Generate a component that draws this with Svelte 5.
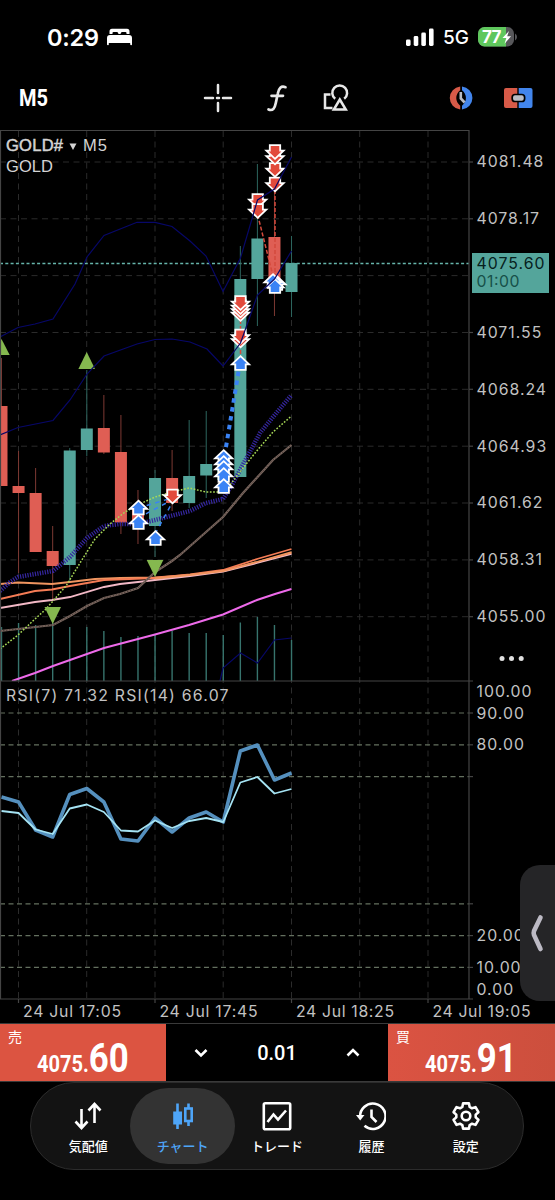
<script>
  const LEFT = 1.5;
  const STEP = 17.06;
  const RIGHT = 469;

  const prices = [
    ['4081.48', 162],
    ['4078.17', 218.8],
    ['4071.55', 332.5],
    ['4068.24', 389.3],
    ['4064.93', 446.2],
    ['4061.62', 503],
    ['4058.31', 559.9],
    ['4055.00', 616.7]
  ];
  const gridRows = [162, 218.8, 275.6, 332.5, 389.3, 446.2, 503, 559.9, 616.7];
  const gridCols = [18.5, 86.7, 155, 223.2, 291.5, 359.7, 428];
  const rsiRows = [713, 744.8, 776.6, 903.8, 935.6, 967.4];
  const rsiLabels = [
    ['100.00', 691],
    ['90.00', 713],
    ['80.00', 744.8],
    ['20.00', 935.6],
    ['10.00', 967.4],
    ['0.00', 989.5]
  ];
  const times = [
    ['24 Jul 17:05', 18.5],
    ['24 Jul 17:45', 155],
    ['24 Jul 18:25', 291.5],
    ['24 Jul 19:05', 428]
  ];

  // high, top of body, bottom of body, low, direction
  const candles = [
    [358, 406, 486, 486, 'down'],
    [451, 486, 493, 573, 'down'],
    [468, 493, 552, 552, 'down'],
    [526, 551, 566, 600, 'down'],
    [448, 450.5, 565, 582, 'up'],
    [370, 428.5, 450, 456, 'up'],
    [395, 428, 452.5, 454, 'down'],
    [415, 452, 522.5, 534, 'down'],
    [490, 508, 522, 544, 'down'],
    [470, 478, 526, 557, 'up'],
    [450, 478, 503, 511, 'down'],
    [420, 476, 503, 508, 'up'],
    [411, 464, 475.5, 498, 'up'],
    [452, 463, 480, 492, 'up'],
    [246, 279, 477, 477, 'up'],
    [164, 238.5, 279, 326, 'up'],
    [150, 237, 285, 316, 'down'],
    [236, 263, 292, 317, 'up']
  ];

  const volumes = [
    627, 623, 625, 623, 627, 627, 631, 637, 636, 634, 631, 633, 633, 635, 622.5,
    617, 625, 640
  ];

  // trade markers, [x, y of the tip], in the order they stack
  const buys = [
    [138.5, 499.5],
    [138.5, 514],
    [155.5, 530],
    [223.7, 449],
    [223.7, 455],
    [223.7, 460],
    [223.7, 467],
    [223.7, 478],
    [240.5, 355],
    [277, 275],
    [273, 273],
    [275, 278]
  ];
  const sells = [
    [172.5, 504.5],
    [240.5, 322],
    [240.5, 318.5],
    [240.5, 315],
    [240.5, 311],
    [240.5, 348.5],
    [240.5, 344.5],
    [257.7, 209],
    [257.7, 219],
    [275, 192.5],
    [275, 178],
    [275, 165.5],
    [275, 160]
  ];

  const rsi7 = [
    797, 802, 830, 837, 794.5, 788.5, 802, 839, 841, 818, 832, 818, 812, 822,
    751, 745, 780, 773
  ];
  const rsi14 = [
    811, 813, 829.5, 834, 808.5, 804.5, 812, 830.5, 831.5, 820.5, 828, 821, 818,
    822, 782.5, 777, 793.5, 789
  ];

  const tabs = [
    { id: 'quotes', label: '気配値' },
    { id: 'chart', label: 'チャート' },
    { id: 'trade', label: 'トレード' },
    { id: 'history', label: '履歴' },
    { id: 'settings', label: '設定' }
  ];

  let active = $state('chart');
  let volume = $state(0.01);

  function xOf(index) {
    return LEFT + index * STEP;
  }

  function toPoints(values) {
    return values.map((y, i) => `${xOf(i)},${y}`).join(' ');
  }

  function changeVolume(delta) {
    volume = Math.max(0.01, volume + delta);
  }

  // six teeth round a hub
  function gearPath() {
    const points = [];
    for (let i = 0; i < 6; i++) {
      for (const [offset, r] of [
        [-22, 9.8],
        [-13, 13],
        [13, 13],
        [22, 9.8]
      ]) {
        const a = ((i * 60 - 90 + offset) * Math.PI) / 180;
        points.push(
          `${(15 + r * Math.cos(a)).toFixed(2)} ${(15 + r * Math.sin(a)).toFixed(2)}`
        );
      }
    }
    return `M${points.join('L')}Z`;
  }
</script>

<div class="app">
  <div class="status">
    <div class="clock">
      <span>0:29</span>
      <svg width="25" height="18" viewBox="0 0 25 18">
        <path d="M2.5 6V3.4Q2.5 .8 5 .8H20Q22.5 .8 22.5 3.4V6H19.5V5Q19.5 4 18.5 4H15Q14 4 13.5 6H11.5Q11 4 10 4H6.5Q5.5 4 5.5 5V6Z" />
        <path d="M0 10Q0 7 3 7H22Q25 7 25 10V16.5Q25 17.3 24.2 17.3T23.2 16.5V15H1.8V16.5Q1.8 17.3 1 17.3T0 16.5Z" />
      </svg>
    </div>
    <div class="signals">
      <svg width="28" height="18" viewBox="0 0 28 18">
        <rect x="0" y="11.5" width="4.6" height="6.5" rx="1.4" />
        <rect x="7.7" y="8" width="4.6" height="10" rx="1.4" />
        <rect x="15.3" y="4.5" width="4.6" height="13.5" rx="1.4" />
        <rect x="23" y="0.5" width="4.6" height="17.5" rx="1.4" />
      </svg>
      <span class="network">5G</span>
      <svg width="40" height="20" viewBox="0 0 40 20">
        <clipPath id="cell"><rect width="36" height="19.5" rx="6.5" /></clipPath>
        <g clip-path="url(#cell)">
          <rect width="36" height="20" fill="#57575a" />
          <rect width="28" height="20" fill="#5fc75d" />
        </g>
        <path d="M37 6.5Q39 7.5 39 10T37 13.5Z" fill="#57575a" />
        <text class="charge" x="4" y="15.5" textLength="19.5">77</text>
        <path d="M31 4L24.5 11H28.3L26.5 16.8L33 9.3H29.2Z" />
      </svg>
    </div>
  </div>

  <header>
    <button class="period" aria-label="M5">
      <svg width="32" height="30">
        <text x="0" y="22.5" textLength="29" lengthAdjust="spacingAndGlyphs">M5</text>
      </svg>
    </button>
    <div class="tools">
      <svg width="30" height="30" viewBox="0 0 30 30" class="line">
        <path d="M15 2V10M15 20V28M2 15H10M20 15H28M14 15H16" stroke-width="2.5" stroke-linecap="round" />
      </svg>
      <svg width="30" height="30" viewBox="0 0 30 30" class="line">
        <path d="M6.5 26.5C11 28.3 12.8 25 13.8 20L15.8 10.5C16.8 5 19 2.6 23.5 4.2M9.5 12.8H21" stroke-width="2.7" stroke-linecap="round" />
      </svg>
      <svg width="30" height="30" viewBox="0 0 30 30" class="line">
        <path d="M9.5 11.5H4V25H11.5" stroke-width="2.5" />
        <path d="M14.2 15.8A7.4 7.4 0 1 1 23.2 15.8" stroke-width="2.5" />
        <path d="M18.8 16.5L24.8 26.5H12.8Z" stroke-width="2.5" />
      </svg>
    </div>
    <div class="trade-tools">
      <svg width="30" height="30" viewBox="0 0 30 30">
        <path d="M14.2 3.5A12 11.6 0 0 0 14.2 26.5V22.7A9.5 9.5 0 0 1 14.2 7.3Z" fill="#d75a48" />
        <path d="M16 3.5A12 11.6 0 0 1 16 26.5V22.7A9.5 9.5 0 0 0 16 7.3Z" fill="#4285ec" />
        <path d="M14.8 9V15.5L18.6 19.5" fill="none" stroke="#b9bcc4" stroke-width="2.6" />
      </svg>
      <svg width="30" height="30" viewBox="0 0 30 30">
        <path d="M14.3 5V25H3Q1 25 1 23V7Q1 5 3 5Z" fill="#d75a48" />
        <path d="M15.7 5V25H27.5Q29.5 25 29.5 23V7Q29.5 5 27.5 5Z" fill="#4285ec" />
        <rect x="9.2" y="11.5" width="12.4" height="7" rx="2.8" fill="#b9bcc4" stroke="#000" stroke-width="1.7" />
      </svg>
    </div>
  </header>

  <main>
    <svg class="chart" width="555" height="893" viewBox="0 130 555 893">
      <defs>
        <clipPath id="plot"><rect x="0" y="130" width={RIGHT} height="551" /></clipPath>
      </defs>

      <g class="grid">
        {#each gridRows as y}
          <path d="M0 {y}H{RIGHT}" />
        {/each}
        {#each gridCols as x}
          <path d="M{x} 131V999" />
        {/each}
      </g>
      <g class="levels">
        {#each rsiRows as y}
          <path d="M0 {y}H{RIGHT}" />
        {/each}
      </g>
      <path class="bid" d="M0 263.5H{RIGHT}" />

      <g clip-path="url(#plot)">
        {#each volumes as top, i}
          <path class="volume" d="M{xOf(i)} {top}V681" />
        {/each}

        {#each candles as [high, top, bottom, low, direction], i}
          <g class={direction}>
            <path d="M{xOf(i)} {high}V{low}" />
            <rect x={xOf(i) - 6} y={top} width="12" height={bottom - top} />
          </g>
        {/each}

        <g class="average">
          <polyline class="orange" points="0,584 18,582.5 52,584 70,582 95,579 120,578 155,577.5 190,575 223,571 257,562 291.5,552" />
          <polyline class="deep" points="0,599 35,591 52,589.5 70,586 104,580 155,578 190,574.5 223,570 257,559 291.5,549" />
          <polyline class="pink" points="0,608 35,602 52,600 70,597 104,587 120,584 138,582 155,580 190,576 223,571.5 257,563 291.5,554" />
          <polyline class="orange" points="155,578.5 190,575 223,571 257,562 291.5,553" />
          <polyline class="violet" points="12,681 35,673 53,666 104,648 155,634.5 189,625 223,614.5 257,600 275,594 291.5,589" />
          <polyline class="brown" points="0,631 18,629 53,625 70,616 87,606 104,598 120,594 138,588 155,572 172,561 180,555 223,517 243,493 273,460 291.5,445" />
          <polyline class="brown-core" points="0,631 18,629 53,625 70,616 87,606 104,598 120,594 138,588 155,572 172,561 180,555 223,517 243,493 273,460 291.5,445" />
          <polyline class="ribbon" points="0,591 10,582 18,577 35,574 53,571 70,557 87,538 104,526 120,524 138,524 155,520 190,511 206,503 223,499 233,483 247,457 260,433 273,417 291.5,395" />
          <polyline class="lime" points="0,649 18,635 35,619 45,610 53,601 66,586 80,563 95,539 110,524 125,512 140,504 155,497 172,492 189,488 206,492 222,492 230,485 247,463 260,447 273,432 291.5,416" />
        </g>

        <path class="sell-link" d="M257.7 215L274 280M275 160V280M240.5 320V360" />
        <path class="buy-link" d="M224.5 456L240.5 360" />
        <path class="buy-link thin" d="M138 508L172 498M138 518L172 500M155 534L172 503" />

        {#each sells as [x, y]}
          <path class="sell" transform="translate({x} {y})" d="M0-1.2L8.6-9.4H5.2V-14.8H-5.2V-9.4H-8.6Z" />
        {/each}
        {#each buys as [x, y]}
          <path class="buy" transform="translate({x} {y})" d="M0 1.2L8.6 9.4H5.2V14.8H-5.2V9.4H-8.6Z" />
        {/each}

        <g class="fractals">
          <path d="M1.5 339L9.7 355H-6.7Z" />
          <path d="M86.7 352L95 369H78.4Z" />
          <path d="M52.7 624L44.5 607H61Z" />
          <path d="M155 577L146.7 560H163.3Z" />
        </g>

        <g class="bands">
          <polyline points="0,337 18,327.5 35,324 53,319 75,284 87,257 104,235.5 137,222.3 155,222.3 172,226.5 190,241 206,256 223,291.5 240.5,258 257.5,200 274.5,189 291.5,157" />
          <polyline points="0,435 18,427.5 53,420.5 70,400 87,374 104,356 137,344 155,339.5 172,339 190,342 207,349 223,366 240.5,343 248,322 257.5,295 274.5,279 291.5,251" />
          <polyline points="220,681 223,668 240.5,653 257.5,663 274.5,640 291.5,638" />
        </g>
      </g>

      <polyline class="rsi7" points={toPoints(rsi7)} />
      <polyline class="rsi14" points={toPoints(rsi14)} />

      <g class="frame">
        <path d="M0.5 130.5H{RIGHT}V999M0.5 130V999M0 681H473M0 999H473" />
        {#each prices as [, y]}
          <path d="M{RIGHT} {y}h4" />
        {/each}
        {#each rsiRows as y}
          <path d="M{RIGHT} {y}h4" />
        {/each}
        {#each times as [, x]}
          <path d="M{x} 999v4" />
        {/each}
      </g>

      <g class="scale">
        {#each prices as [label, y]}
          <text x="476.5" y={y + 5.3}>{label}</text>
        {/each}
        {#each rsiLabels as [label, y]}
          <text x="476.5" y={y + 5.5}>{label}</text>
        {/each}
        {#each times as [label, x]}
          <text x={x + 4.5} y="1017" textLength="99">{label}</text>
        {/each}
        <text x="6" y="700.5" textLength="223.5">RSI(7) 71.32 RSI(14) 66.07</text>
      </g>

      <g class="tag">
        <rect x="472" y="253" width="77" height="40" />
        <text x="476.5" y="268.5" textLength="68">4075.60</text>
        <text x="476.5" y="287" class="countdown" textLength="43">01:00</text>
      </g>

      <g class="symbol">
        <text x="6" y="151" class="name" textLength="57">GOLD#</text>
        <path d="M69.5 143.5H76.5L73 150Z" />
        <text x="83" y="151" textLength="24">M5</text>
        <text x="6" y="171.5" textLength="47">GOLD</text>
      </g>

      <g class="more">
        <circle cx="502" cy="658.5" r="2.5" />
        <circle cx="511.5" cy="658.5" r="2.5" />
        <circle cx="521.2" cy="658.5" r="2.5" />
      </g>
    </svg>

    <button class="drawer" aria-label="‹">
      <svg width="14" height="40" viewBox="0 0 14 40">
        <path d="M10.5 4.5L4 18Q3.3 20 4 22L10.5 36" />
      </svg>
    </button>
  </main>

  <div class="deal">
    <button class="quote">
      <span>売</span>
      <svg width="100" height="62">
        <text transform="translate(1 0) scale(0.87 1)" y="48">4075.<tspan class="cents">60</tspan></text>
      </svg>
    </button>
    <div class="lots">
      <button aria-label="-" onclick={() => changeVolume(-0.01)}>
        <svg width="16" height="12"><path d="M2.5 3L8 8.5L13.5 3" /></svg>
      </button>
      <span>{volume.toFixed(2)}</span>
      <button aria-label="+" onclick={() => changeVolume(0.01)}>
        <svg width="16" height="12"><path d="M2.5 8.5L8 3L13.5 8.5" /></svg>
      </button>
    </div>
    <button class="quote">
      <span>買</span>
      <svg width="100" height="62">
        <text transform="translate(1 0) scale(0.87 1)" y="48">4075.<tspan class="cents">91</tspan></text>
      </svg>
    </button>
  </div>

  <nav>
    {#each tabs as tab}
      <button class:active={active === tab.id} onclick={() => (active = tab.id)}>
        <svg width="30" height="30" viewBox="0 0 30 30">
          {#if tab.id === 'quotes'}
            <path d="M8.5 8V26.5M2.5 20.5L8.5 27L14.5 20.5M21.5 22V3.5M15.5 9.5L21.5 3L27.5 9.5" />
          {:else if tab.id === 'chart'}
            <path d="M9.5 2.5V28M20.5 2.5V7M20.5 20V25" />
            <rect x="6.2" y="11.5" width="6.8" height="11" fill="currentColor" stroke-width="2" />
            <rect x="17.3" y="7.5" width="6.4" height="12.5" />
          {:else if tab.id === 'trade'}
            <rect x="1.8" y="2.2" width="26.4" height="26" rx="1.5" />
            <path d="M5.5 21L11.5 13.5L16 18.5L24 9.5" />
          {:else if tab.id === 'history'}
            <path d="M4.2 16.5A12.7 12.7 0 1 1 8.5 24.8M15.5 8.5V16L20.5 21" />
            <path d="M0 14H8.5L4.2 19.5Z" fill="currentColor" stroke="none" />
          {:else}
            <path d={gearPath()} stroke-linejoin="round" />
            <circle cx="15" cy="15" r="4.3" />
          {/if}
        </svg>
        <span>{tab.label}</span>
      </button>
    {/each}
  </nav>
</div>

<style>
  :global(body) {
    background: #000;
  }

  .app {
    box-sizing: border-box;
    background: #000;
    color: #fff;
    display: flex;
    flex-direction: column;
    font-family: Inter, 'Noto Sans CJK JP', sans-serif;
    height: 1200px;
    overflow: hidden;
    width: 555px;
  }

  button {
    background: none;
    border: none;
    color: inherit;
    font: inherit;
    padding: 0;
  }

  svg {
    display: block;
    flex: none;
    fill: currentColor;
  }

  .status {
    box-sizing: border-box;
    display: flex;
    align-items: center;
    justify-content: space-between;
    height: 66px;
    padding: 8px 37px 0 47px;
  }

  .clock {
    display: flex;
    align-items: center;
    gap: 8px;
    font-size: 23.5px;
    font-weight: 600;
    letter-spacing: -0.2px;
  }

  .signals {
    display: flex;
    align-items: center;
    gap: 9px;
  }

  .network {
    font-size: 19px;
    font-weight: 500;
  }

  .charge {
    font-size: 17px;
    font-weight: 700;
  }

  header {
    display: flex;
    align-items: center;
    height: 64px;
  }

  .period {
    margin-left: 19px;
    width: 184px;
  }

  .period text {
    font-family: Roboto, sans-serif;
    font-size: 23px;
    font-weight: 700;
  }

  .tools {
    display: flex;
    gap: 29px;
  }

  .line {
    color: #e8e8e8;
    fill: none;
    stroke: currentColor;
  }

  .trade-tools {
    display: flex;
    gap: 27px;
    margin-left: 95px;
  }

  main {
    height: 893px;
    position: relative;
  }

  .grid path {
    fill: none;
    stroke: #2b2b2b;
    stroke-dasharray: 6 4.5;
  }

  .levels path {
    stroke: #64705f;
    stroke-dasharray: 5 3.5;
    stroke-width: 1.2;
  }

  .bid {
    stroke: #66b5ab;
    stroke-dasharray: 3 2.3;
    stroke-width: 1.5;
  }

  .volume {
    stroke: #37746d;
    stroke-width: 1.4;
  }

  .up {
    fill: #54a59b;
    stroke: #2d665f;
  }

  .down {
    fill: #df5e54;
    stroke: #7d3933;
  }

  .up rect,
  .down rect {
    stroke: none;
  }

  .average polyline,
  .bands polyline {
    fill: none;
    stroke-width: 1.8;
  }

  .average .orange {
    stroke: #f09560;
  }

  .average .deep {
    stroke: #f57c55;
  }

  .average .pink {
    stroke: #f3b9c6;
  }

  .average .violet {
    stroke: #ee6aea;
    stroke-width: 2;
  }

  .average .brown {
    stroke: #7a675f;
    stroke-width: 2.2;
  }

  .average .brown-core {
    stroke: #3d302c;
    stroke-dasharray: 1.5 1.5;
    stroke-width: 0.8;
  }

  .average .ribbon {
    stroke: #3526a0;
    stroke-dasharray: 1.2 1.3;
    stroke-width: 4.5;
  }

  .average .lime {
    stroke: #a8d957;
    stroke-dasharray: 1.7 1.6;
    stroke-width: 1.5;
  }

  .bands polyline {
    stroke: #070768;
    stroke-width: 1.2;
  }

  .sell-link {
    fill: none;
    stroke: #d44a3c;
    stroke-dasharray: 4 2;
    stroke-width: 1.5;
  }

  .buy-link {
    fill: none;
    stroke: #3a83f5;
    stroke-dasharray: 4.5 4.5;
    stroke-width: 4;
  }

  .buy-link.thin {
    stroke-width: 1.5;
  }

  .sell,
  .buy {
    fill: #e24a3b;
    stroke: #fff;
    stroke-width: 1.8;
  }

  .buy {
    fill: #3a83f5;
  }

  .fractals {
    fill: #85b84f;
  }

  .rsi7,
  .rsi14 {
    fill: none;
    stroke: #5590be;
    stroke-linejoin: round;
    stroke-width: 3.6;
  }

  .rsi14 {
    stroke: #a5e3f3;
    stroke-width: 1.8;
  }

  .frame path {
    fill: none;
    stroke: #444;
    stroke-width: 1.2;
  }

  .scale {
    fill: #c2c2c2;
    font-size: 15.8px;
    letter-spacing: 1px;
  }

  .tag rect {
    fill: #54a59b;
  }

  .tag text {
    fill: #06201d;
    font-size: 15.8px;
  }

  .tag .countdown {
    fill: #175049;
  }

  .symbol {
    fill: #d4d4d4;
    font-family: 'Liberation Sans', sans-serif;
    font-size: 16.5px;
  }

  .symbol .name {
    stroke: #d4d4d4;
    stroke-width: 0.5;
  }

  .more {
    fill: #e0e0e0;
  }

  .drawer {
    background: #252527;
    border-radius: 20px 0 0 20px;
    box-sizing: border-box;
    display: flex;
    align-items: center;
    height: 136px;
    padding-left: 10px;
    position: absolute;
    right: 0;
    top: 735px;
    width: 35px;
  }

  .drawer path {
    fill: none;
    stroke: #bcbac4;
    stroke-linecap: round;
    stroke-width: 4.6;
  }

  .deal {
    border-bottom: 1px solid #3a3a3a;
    border-top: 1px solid #3a3a3a;
    box-sizing: border-box;
    display: grid;
    grid-template-columns: 166px 1fr 167px;
    grid-template-rows: 57px;
    height: 59px;
  }

  .quote {
    background: #dc5441;
    display: flex;
    align-items: flex-start;
  }

  .quote:last-child {
    background: linear-gradient(90deg, #db5342, #cc4f3d);
  }

  .quote span {
    font-size: 14px;
    line-height: 20px;
    margin: 3px 14px 0 8px;
  }

  .quote svg {
    margin-bottom: -5px;
  }

  .quote text {
    font-family: Roboto, sans-serif;
    font-size: 23px;
    font-weight: 700;
  }

  .quote .cents {
    font-size: 40px;
  }

  .lots {
    display: flex;
    align-items: center;
    justify-content: space-between;
    font-family: Roboto, sans-serif;
    font-size: 20px;
    font-weight: 500;
    padding: 0 27px;
  }

  .lots path {
    fill: none;
    stroke: #fff;
    stroke-width: 2.6;
  }

  nav {
    background: #131313;
    border: 1px solid #2c2c2c;
    border-radius: 44px;
    box-sizing: border-box;
    display: grid;
    grid-template-columns: repeat(5, 1fr);
    height: 88px;
    margin: 0 31px 0 30px;
    padding: 5px 10px;
  }

  nav button {
    display: flex;
    flex-direction: column;
    align-items: center;
    border-radius: 38px;
    font-size: 13px;
    font-weight: 500;
    gap: 5px;
    margin: 0 -5.5px;
    padding-top: 13px;
  }

  nav button.active {
    background: #333;
    color: #4ea5f8;
  }

  nav svg {
    fill: none;
    stroke: currentColor;
    stroke-width: 2.6;
  }

  nav span {
    line-height: 20px;
  }
</style>
